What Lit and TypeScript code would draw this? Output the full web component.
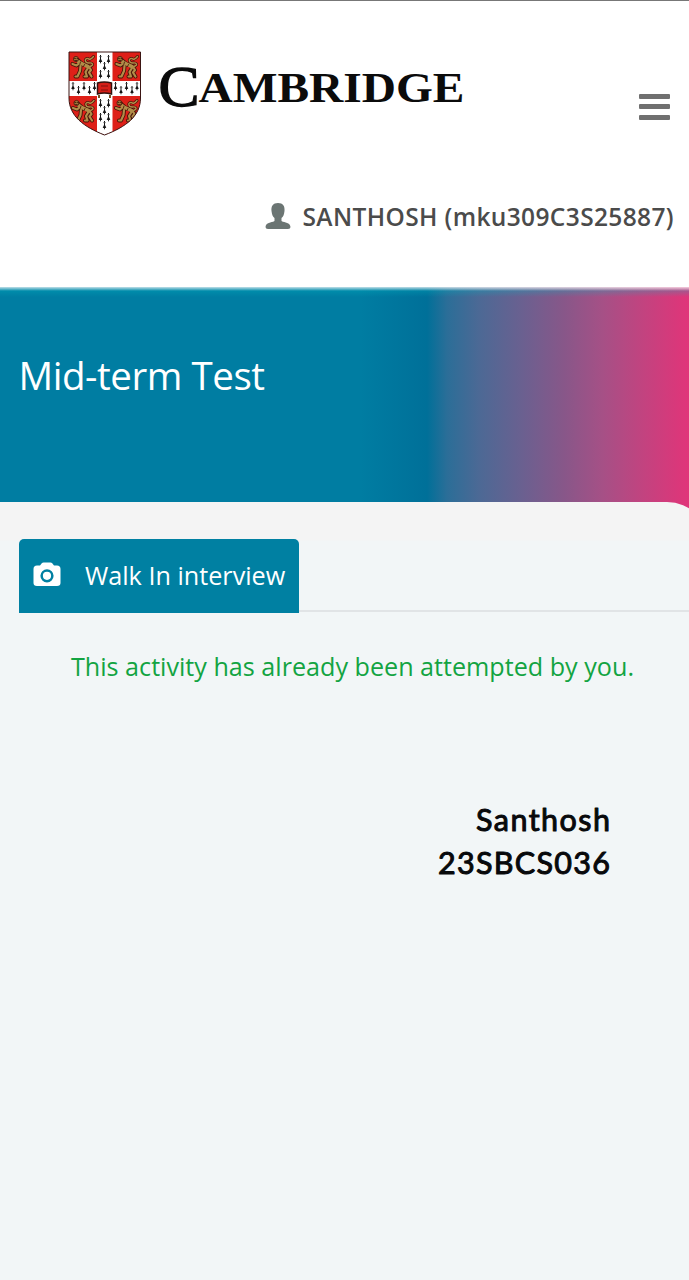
import { LitElement, html, css, svg } from "lit";
import { customElement } from "lit/decorators.js";

// Ermine tail, drawn hanging from its origin
const tail = (x: number, y: number) => svg`
  <path transform="translate(${x} ${y})" fill="#151515"
    d="M-.5 0h1v4l1.300 2.800-1.200.2-.6 2-.6-2-1.200-.2 1.300-2.800z"/>
  <path d="M${x - 1.3} ${y + 1.6}h2.6" stroke="#555" stroke-width=".7"/>`;

const body = "M6 5L9 7.500L12 10L18 12L20.500 16L18.500 18.500L21 22.500M9 9L6 11.500L2 10M10 12L9.500 17L7 22.500H5M17.500 14L15 18L16.500 22.500H14";
const tailCurl = "M19.500 12.500C24 11 22 8.500 18.500 9C14 9 13.500 4 17.500 4.500C19 6 21 5 23 2.500";
const lion = (x: number, y: number) => svg`
  <g transform="translate(${x} ${y})" fill="none" stroke-linecap="round" stroke-linejoin="round">
    <g stroke="#4a160a"><path d=${body} stroke-width="4"/><path d=${tailCurl} stroke-width="2.900"/></g>
    <g stroke="#b18d49"><path d=${body} stroke-width="2.200"/><path d=${tailCurl} stroke-width="1.400"/></g>
    <path d="M8 8L17 12.500" stroke="#b18d49" stroke-width="3.400"/>
    <circle cx="5.500" cy="5" r="2.600" fill="#9c7638" stroke="#4a160a" stroke-width=".8"/>
    <path d="M4 4.500h1M6.500 4.500h.8M4.600 6.500h1.600M10 8l-.6 2M14 10.500l-1 2" stroke="#3d1408" stroke-width=".8"/>
  </g>`;

@customElement("cambridge-logo")
class CambridgeLogo extends LitElement {
  static styles = css`
    :host { display: block; }
    .logo { display: block; }
    .word { font-family: "Liberation Serif", serif; fill: #0b0b0b; }
    .initial { stroke: #0b0b0b; stroke-width: 1.3; }
    .rest { font-weight: 700; }
  `;
  render() {
    return html`<svg class="logo" width="410" height="90" viewBox="66 50 410 90" role="img">
      <defs><clipPath id="shield"><path d="M69 52H140.500V98C140.500 116 126 127 104.500 135C84 127 69 116 69 98Z"/></clipPath></defs>
      <g clip-path="url(#shield)">
        <path fill="#de2018" d="M68 51h74v86H68z"/>
        <path fill="#fff" d="M97 51h15.500v86H97zM68 81h74v15H68z"/>
        ${lion(70.5, 54)}${lion(114.5, 54)}${lion(71, 98)}${lion(114, 98)}
        ${[[100.5, 55], [108.5, 55], [104.5, 62], [100.5, 70], [108.5, 70], [100.5, 99], [108.5, 99], [104.5, 106], [100.5, 113], [108.5, 113], [104.5, 121],
           [73, 82], [78.5, 86], [84, 82], [89.5, 86], [94.5, 82], [115.5, 82], [121, 86], [126.5, 82], [132, 86], [137, 82]].map(([x, y]) => tail(x, y))}
        <path d="M97.500 83Q104 81 111.500 83V94Q104 92 97.500 94Z" fill="#d51e17" stroke="#32110d" stroke-width="1.500"/>
        <path d="M99 95v3M110 95v3" stroke="#765226" stroke-width="2"/>
        <path d="M101 86h7M101 90h7" stroke="#80110e" stroke-width="1"/>
      </g>
      <path d="M69 52H140.500V98C140.500 116 126 127 104.500 135C84 127 69 116 69 98Z" fill="none" stroke="#3b1513" stroke-width="1"/>
      <text class="word initial" x="158.500" y="106" font-size="58" textLength="41" lengthAdjust="spacingAndGlyphs">C</text>
      <text class="word rest" x="198.500" y="102" font-size="43" textLength="266" lengthAdjust="spacingAndGlyphs">AMBRIDGE</text>
    </svg>`;
  }
}

@customElement("app-root")
class AppRoot extends LitElement {
  static styles = css`
    :host { display: block; height: 1280px; overflow: hidden; background: #f2f6f7; font-family: "Open Sans", sans-serif; }
    * { box-sizing: border-box; }
    .header { height: 287px; background: #fff; border-top: 1px solid #777; }
    .top { display: flex; justify-content: space-between; padding: 49px 19px 0 66px; }
    .menu { display: grid; gap: 5.5px; height: 26px; width: 31px; margin-top: 43.5px; }
    .menu i { height: 5px; background: #707070; border-radius: 1px; }
    .user { display: flex; justify-content: flex-end; align-items: center; height: 40px; margin-top: 56px; padding-right: 15px; color: #4b4b4b; font-weight: 600; font-size: 24.5px; letter-spacing: .37px; gap: 12px; white-space: nowrap; }
    .hero { height: 233px; padding: 65px 18.5px; color: #fff; background:
      linear-gradient(180deg, #ffffffc0 0, #00b8c440 4px, #00b8c400 10px),
      linear-gradient(90deg, #007da2 0, #007da2 360px, #007099 427px, #2b6e98 447px, #4c6995 479px, #6b6090 523px, #875789 563px, #a65086 603px, #c04480 640px, #db377a 680px, #e0357a 689px); }
    .title { margin: 0; font-size: 38.5px; font-weight: 400; line-height: 46px; letter-spacing: -.45px; white-space: nowrap; }
    .sheet { margin-top: -18px; border-radius: 0 42px 0 0; margin-right: -20px; background: linear-gradient(#f4f4f4 0 38px, #f2f6f7 39px); padding-top: 37px; height: 796px; }
    .tabs { display: flex; margin-left: 19px; border-bottom: 2px solid #e1e4e6; height: 73px; }
    .tab { display: flex; align-items: center; gap: 24px; width: 280px; height: 74px; padding: 0 0 3px 14px; color: #fff; background: #0080a2; border-radius: 5px 5px 0 0; font-size: 25.2px; white-space: nowrap; }
    .notice { margin: 36px 0 0 71px; color: #13a442; font-size: 25.15px; line-height: 36px; white-space: nowrap; }
    .sign { display: block; margin: 114px 0 0 430px; font-family: Lato, sans-serif; font-size: 30.5px; }
    .sign text { fill: #08090b; stroke: #08090b; stroke-width: 1; stroke-linejoin: round; }
    svg { display: block; flex: none; }
  `;
  render() {
    return html`
      <header class="header">
        <div class="top"><cambridge-logo></cambridge-logo><div class="menu"><i></i><i></i><i></i></div></div>
        <div class="user">
          <svg width="26" height="28" viewBox="0 0 26 28"><path fill="#6b7573" d="M13 1C8 1 6 4 6.500 9C7 13 8 15 9.500 16V19C6 21 1 20 .5 25Q.5 27 3 27H23Q25.500 27 25.500 25C25 20 20 21 16.500 19V16C18 15 19 13 19.500 9C20 4 18 1 13 1Z"/></svg>
          <span>SANTHOSH (mku309C3S25887)</span>
        </div>
      </header>
      <section class="hero"><h1 class="title">Mid-term Test</h1></section>
      <main class="sheet">
        <div class="tabs"><div class="tab">
          <svg width="28" height="25" viewBox="0 0 28 25"><path fill="#fff" fill-rule="evenodd" d="M4 3.500H7L9 1Q9.500.5 10.500.5H17.500Q18.500.5 19 1L21 3.500H24Q27.500 3.500 27.500 7V21Q27.500 24 24 24H4Q.5 24 .5 21V7Q.5 3.500 4 3.500ZM14 7.200a6.600 6.600 0 1 0 0 13.200a6.600 6.600 0 1 0 0-13.200ZM14 9.700a4.100 4.100 0 1 1 0 8.200a4.100 4.100 0 1 1 0-8.200Z"/></svg>
          <span>Walk In interview</span></div></div>
        <p class="notice">This activity has already been attempted by you.</p>
        <svg class="sign" width="190" height="90" viewBox="430 798 190 90">
          <text x="476" y="830.500" textLength="134" lengthAdjust="spacing">Santhosh</text>
          <text x="438" y="873.500" textLength="172" lengthAdjust="spacing">23SBCS036</text>
        </svg>
      </main>`;
  }
}
